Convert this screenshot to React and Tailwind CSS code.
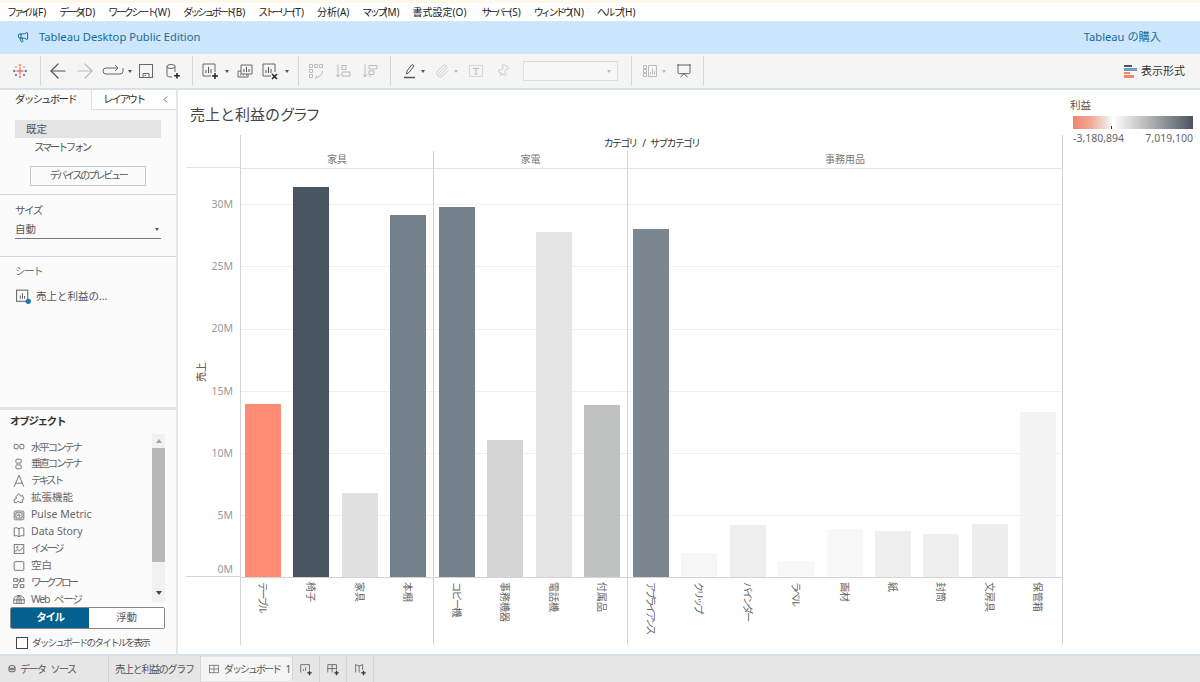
import {
  ArrowLeft,
  ArrowRight,
  ChevronLeft,
  Megaphone,
  Paperclip,
  Pin,
  Presentation,
} from 'lucide-react';

const jp = 'font-["Noto_Sans","Noto_Sans_CJK_JP",sans-serif]';

// the reference font has much narrower kana than Noto, so kana strings get negative tracking
const menus = [
  ['ファイル', '(F)', 'tracking-[-3px]'],
  ['データ', '(D)', 'tracking-[-2.400px]'],
  ['ワークシート', '(W)', 'tracking-[-2.250px]'],
  ['ダッシュボード', '(B)', 'tracking-[-2.900px]'],
  ['ストーリー', '(T)', 'tracking-[-3.200px]'],
  ['分析', '(A)', ''],
  ['マップ', '(M)', 'tracking-[-2.600px]'],
  ['書式設定', '(O)', ''],
  ['サーバー', '(S)', 'tracking-[-3px] ml-[2px]'],
  ['ウィンドウ', '(N)', 'tracking-[-2.700px]'],
  ['ヘルプ', '(H)', 'tracking-[-1.600px]'],
];

const panes = [
  {
    name: '家具',
    pad: 'pl-[4px]',
    size: 'w-[193px]',
    bars: [
      ['テーブル', 173, '#ff8c73', 'tracking-[-2.500px]'],
      ['椅子', 390, '#4a5460', ''],
      ['家具', 84, '#e1e1e1', ''],
      ['本棚', 362, '#75818a', ''],
    ],
  },
  {
    name: '家電',
    pad: 'pl-[5px]',
    size: 'w-[194px]',
    bars: [
      ['コピー機', 370, '#74808a', 'tracking-[-1.500px]'],
      ['事務機器', 137, '#d4d4d4', ''],
      ['電話機', 345, '#e4e4e4', ''],
      ['付属品', 172, '#c0c2c1', ''],
    ],
  },
  {
    name: '事務用品',
    pad: 'pl-[5px]',
    size: 'w-[434px]',
    bars: [
      ['アプライアンス', 348, '#7c868e', 'tracking-[-2.700px]'],
      ['クリップ', 24, '#f6f6f6', 'tracking-[-2.500px]'],
      ['バインダー', 52, '#eeeeee', 'tracking-[-2.500px]'],
      ['ラベル', 16, '#f8f8f8', 'tracking-[-2.500px]'],
      ['画材', 48, '#f8f8f8', ''],
      ['紙', 46, '#efefef', ''],
      ['封筒', 43, '#efefef', ''],
      ['文房具', 53, '#ededed', ''],
      ['保管箱', 165, '#f4f4f4', ''],
    ],
  },
];

const ticks = ['30M', '25M', '20M', '15M', '10M', '5M'];

const Svg = ({ children, className = 'w-4 h-4' }) => (
  <svg viewBox="0 0 16 16" fill="none" stroke="#666" strokeWidth="1" className={`${className} shrink-0`}>
    {children}
  </svg>
);

const Caret = ({ light, className = '' }) => (
  <span className={`shrink-0 w-0 h-0 mr-[1px] border-x-[2px] border-x-transparent border-t-[3px] ${light ? 'border-t-[#bbb]' : 'border-t-[#555]'} ${className}`} />
);

const Divider = ({ className = '' }) => <div className={`w-px h-[30px] bg-[#d6d6d6] shrink-0 ${className}`} />;

const ChartIcon = ({ children }) => (
  <svg viewBox="0 0 18 18" fill="none" stroke="#666" strokeWidth="1" className="w-[18px] h-[18px] shrink-0">
    <path d="M14 10V2H2v12h8" />
    <path d="M5 11V8M7.500 11V5M10 11V7" stroke="#555" />
    {children}
  </svg>
);

const objects = [
  ['水平コンテナ', 'tracking-[-2.200px]', <g key="a"><rect x="2.500" y="5" width="4.500" height="5" rx="1" /><rect x="9" y="5" width="4.500" height="5" rx="1" /></g>],
  ['垂直コンテナ', 'tracking-[-2.200px]', <g key="b"><rect x="4.500" y="2.500" width="6" height="4.500" rx="1" /><rect x="4.500" y="9" width="6" height="4.500" rx="1" /></g>],
  ['テキスト', 'tracking-[-2.800px]', <path key="c" d="M2.500 14.500 8 1.500l5.500 13M4.300 10.500h7.400" />],
  ['拡張機能', '', <path key="d" d="M2.500 13V9.500L5 8.500 4.500 6.500 7.500 3l2.500 3 2-1 1.500 4-2 1 .5 3H8L7 11.500 5 13.500z" />],
  ['Pulse Metric', '', <g key="e"><rect x="2.500" y="3.500" width="11" height="10" rx="1.500" /><rect x="4.500" y="5.500" width="7" height="6" /><path d="M6 8.500h1l1-1.500 .5 3 1-1.500" /></g>],
  ['Data Story', '', <path key="f" d="M8 4.500C6.500 3 4.500 3 2.500 3.500v9c2-.5 4-.5 5.500 1 1.500-1.500 3.500-1.500 5.500-1v-9C11.500 3 9.500 3 8 4.500zM8 4.500v9" />],
  ['イメージ', 'tracking-[-2.800px]', <g key="g"><rect x="2.500" y="3" width="11" height="10" /><path d="m3 11 3.500-2.500 2 1.500 4-3.500" /><circle cx="6" cy="6" r=".8" /></g>],
  ['空白', '', <rect key="h" x="2.500" y="3" width="11" height="10" rx="1" />],
  ['ワークフロー', 'tracking-[-3px]', <g key="i"><rect x="2" y="3" width="4" height="3" /><rect x="9.500" y="3" width="4" height="3" /><rect x="2" y="10" width="4" height="3" /><rect x="9.500" y="10" width="4" height="3" /><path d="M6 4.500h3.500M9.500 5.500 6 10.500" /></g>],
  ['Web ページ', 'tracking-[-1.200px] [word-spacing:3px]', <g key="j"><path d="M2 9a6 5 0 0 1 12 0v4H2z" /><path d="M2 9h12M8 4v9M5.500 13V9c0-2 1-4 2.500-5 1.500 1 2.500 3 2.500 5v4" /></g>],
];

const Sidebar = () => (
  <aside className="w-[178px] shrink-0 flex flex-col bg-[#fbfbfb] border-r-2 border-[#dfe6ec]">
    <div className="h-[20px] flex text-[10.500px] text-[#333] shrink-0">
      <div className="w-[91px] bg-[#fbfbfb] pl-[15px] pt-[2px] tracking-[-1.800px] whitespace-nowrap">ダッシュボード</div>
      <div className="flex-1 flex items-center justify-between bg-white border-l border-b border-[#ddd] pl-[11px] pr-[5px]">
        <span className="tracking-[-2.300px]">レイアウト</span>
        <ChevronLeft size={11} color="#555" />
      </div>
    </div>
    <div className="h-[85px] shrink-0 border-b border-[#d4d4d4] pt-[10px] text-[10.500px] text-[#555]">
      <div className="mx-[15px] h-[18px] leading-[18px] pl-[11px] bg-[#e4e4e4]">既定</div>
      <div className="pl-[34px] mt-[1px] leading-[17px] tracking-[-2.500px]">スマートフォン</div>
      <div className="mx-[30px] mt-[10px] h-[20px] leading-[17px] text-center text-[10px] border border-[#c8c8c8] bg-[#fbfbfb] tracking-[-2.300px]">デバイスのプレビュー</div>
    </div>
    <div className="h-[62px] shrink-0 border-b border-[#d4d4d4] px-[15px] pt-[7px] text-[10.500px] text-[#555]">
      <div className="leading-[16px] tracking-[-1.500px]">サイズ</div>
      <div className="mt-[1px] h-[20px] pt-[2px] flex items-center justify-between border-b border-[#777] pr-[1px]">
        <span>自動</span>
        <Caret />
      </div>
    </div>
    <div className="h-[153px] shrink-0 border-b-[3px] border-[#e4e4e4] px-[15px] pt-[6px] text-[10.500px] text-[#777]">
      <div className="leading-[16px] tracking-[-1.500px]">シート</div>
      <div className="mt-[9px] flex items-center gap-[4px] text-[#555]">
        <Svg className="w-[17px] h-[17px]">
          <rect x="1.500" y="2" width="10.500" height="10.500" />
          <path d="M5 10V7M7 10V5M9 10V7.500" />
          <circle cx="12.500" cy="12.500" r="2.500" fill="#1f77b4" stroke="none" />
        </Svg>
        <span>売上と利益の…</span>
      </div>
    </div>
    <div className="flex-1 flex flex-col pl-[10px] pr-[11px] pt-[3px] min-h-0">
      <div className="text-[10.500px] font-bold text-[#333] leading-[16px] tracking-[-1.300px]">オブジェクト</div>
      <div className="mt-[5px] h-[171px] flex items-start shrink-0">
        <div className="flex-1 flex flex-col pt-[5px] text-[10.500px] text-[#666]">
          {objects.map(([label, tracking, icon]) => (
            <div key={label} className="h-[16.900px] shrink-0 flex items-center gap-[5px] pl-[2px] whitespace-nowrap">
              <Svg className="w-[14px] h-[14px]">{icon}</Svg>
              <span className={tracking}>{label}</span>
            </div>
          ))}
        </div>
        <div className="w-[13px] h-[168px] bg-[#f1f1f1] flex flex-col items-center">
          <div className="h-[14px] flex items-center">
            <span className="w-0 h-0 border-x-[3px] border-x-transparent border-b-[4px] border-b-[#a6a6a6]" />
          </div>
          <div className="w-full h-[114px] bg-[#b8b8b8]" />
          <div className="flex-1 flex items-end pb-[7px]">
            <span className="w-0 h-0 border-x-[3px] border-x-transparent border-t-[4px] border-t-[#444]" />
          </div>
        </div>
      </div>
      <div className="mt-[2px] h-[22px] flex border border-[#888] rounded-[2px] text-[10.500px] overflow-hidden w-[155px] shrink-0">
        <div className="w-[78px] bg-[#04618d] text-white font-bold flex items-center justify-center tracking-[-1.300px]">タイル</div>
        <div className="flex-1 bg-white text-[#555] flex items-center justify-center">浮動</div>
      </div>
      <div className="mt-[7px] ml-[6px] flex items-center gap-[4px] text-[9.500px] text-[#555] whitespace-nowrap">
        <span className="w-[12px] h-[12px] border border-[#444] bg-white shrink-0" />
        <span className="tracking-[-1.700px]">ダッシュボードのタイトルを表示</span>
      </div>
    </div>
  </aside>
);

const Chart = () => (
  <div className="w-[885px] shrink-0 flex flex-col pl-[8px] bg-white">
    <div className="h-[45px] pl-[4px] flex items-start shrink-0">
      <h1 className="text-[15px] leading-[22px] mt-[13px] font-normal text-[#444] whitespace-nowrap">
        売上と利益の<span className="tracking-[-2.300px]">グラフ</span>
      </h1>
    </div>
    <div className="flex shrink-0">
      <div className="w-[54px] shrink-0 flex flex-col">
        <div className="h-[33px] border-b border-[#e4e4e4]" />
        <div className="h-[409px] relative border-b border-[#d4d4d4]">
          <span className="absolute left-[8px] top-[194px] text-[10px] text-[#444] [writing-mode:vertical-rl] [text-orientation:sideways] rotate-180">売上</span>
          <div className="h-full pt-[29px] pr-[7px] flex flex-col items-end text-[10.500px] text-[#999]">
            {ticks.map((t) => (
              <div key={t} className="h-[62.300px] leading-[14px]">{t}</div>
            ))}
            <div className="leading-[14px] -mt-[8px]">0M</div>
          </div>
        </div>
      </div>
      <div className="w-[823px] border-l border-r border-[#d4d4d4]">
        <div className="h-[16px] text-[10px] leading-[16px] text-[#333] text-center tracking-[-1.800px] [word-spacing:5px]">カテゴリ / サブカテゴリ</div>
        <div className="flex">
          {panes.map((pane, i) => (
            <div key={pane.name} className={`${pane.size} shrink-0 ${i < 2 ? 'border-r border-[#d4d4d4]' : ''} flex flex-col`}>
              <div className="h-[17px] text-[10px] leading-[16px] text-[#777] text-center border-b border-[#e4e4e4] box-content">{pane.name}</div>
              <div className={`h-[409px] relative border-b border-[#d4d4d4] flex items-end gap-[12.400px] ${pane.pad}`}>
                <div className="absolute inset-x-0 top-[35px] h-[312px] flex flex-col">
                  {ticks.map((t) => (
                    <div key={t} className="h-[62.300px] border-t border-[#f0f0f0] shrink-0" />
                  ))}
                </div>
                {pane.bars.map(([label, h, color]) => (
                  <div key={label} className="relative w-[36px] shrink-0" style={{ height: h, backgroundColor: color }} />
                ))}
              </div>
              <div className={`h-[67px] flex gap-[12.400px] pt-[4px] ${pane.pad}`}>
                {pane.bars.map(([label, , , tracking]) => (
                  <div key={label} className="w-[36px] shrink-0 flex justify-center">
                    <span className={`text-[10px] leading-[14px] text-[#666] [writing-mode:vertical-rl] [text-orientation:sideways] whitespace-nowrap h-fit ${tracking}`}>{label}</span>
                  </div>
                ))}
              </div>
            </div>
          ))}
        </div>
      </div>
    </div>
  </div>
);

const Legend = () => (
  <div className="flex-1 pl-[10px] pt-[7px] bg-white min-w-0">
    <div className="text-[10.500px] leading-[16px] text-[#555] -ml-[3px]">利益</div>
    <div className="relative mt-[3px] w-[120px] h-[13px] bg-[linear-gradient(90deg,#f5836d_0%,#f0aa98_15%,#efe3da_28%,#ffffff_33%,#c9c9c9_55%,#8a8f94_78%,#4a5460_100%)]">
      <span className="absolute left-[38px] bottom-0 w-px h-[3px] bg-[#333]" />
    </div>
    <div className="w-[120px] mt-[2px] flex justify-between text-[10.500px] leading-[14px] text-[#666]">
      <span>-3,180,894</span>
      <span>7,019,100</span>
    </div>
  </div>
);

export default function App() {
  return (
    <div className={`w-[1200px] h-[682px] overflow-hidden flex flex-col bg-white ${jp}`}>
      <div className="h-[3px] shrink-0 bg-[#fdf9e8]" />
      <nav className="h-[18px] shrink-0 flex items-center pl-[7px] gap-[13px] text-[10px] text-[#222] whitespace-nowrap">
        {menus.map(([m, key, tracking]) => (
          <span key={m} className={tracking}>{m}<span className="tracking-normal">{key}</span></span>
        ))}
      </nav>
      <div className="h-[33px] shrink-0 bg-[#cce6fd] flex items-center justify-between pl-[17px] pr-[39px] text-[11.200px] text-[#186b93]">
        <div className="flex items-center gap-[10px]">
          <Megaphone size={12} color="#186b93" />
          <span>Tableau Desktop Public Edition</span>
        </div>
        <span>Tableau の購入</span>
      </div>
      <div className="h-[36px] shrink-0 bg-[#f5f5f5] border-b-2 border-[#d5e0e8] flex items-center pl-[12px] pr-[15px]">
        <Svg>
          <path d="M8 4.500v7M4.500 8h7" stroke="#e8765c" strokeWidth="1.300" />
          <path d="M8 1v2.500M6.800 2.200h2.400M8 12.500V15M6.800 13.800h2.400" stroke="#e8765c" />
          <path d="M1 8h2.500M2.200 6.800v2.400M12.500 8H15M13.800 6.800v2.400" stroke="#3f6f96" />
          <path d="M3 4h2M4 3v2M11 4h2M12 3v2" stroke="#e8a090" />
          <path d="M3 12h2M4 11v2M11 12h2M12 11v2" stroke="#3f6f96" />
        </Svg>
        <Divider className="ml-[12px]" />
        <ArrowLeft size={24} color="#555" strokeWidth={1.200} className="ml-[5px] shrink-0" />
        <ArrowRight size={24} color="#bbb" strokeWidth={1.200} className="ml-[3px] shrink-0" />
        <svg viewBox="0 0 23 16" fill="none" stroke="#666" className="ml-[5px] w-[23px] h-[16px] shrink-0">
          <path d="M15 5H4a3 3 0 0 0 0 6h14a3 3 0 0 0 3-3V5" />
          <path d="m13 2 3 3-3 3" />
        </svg>
        <Caret className="ml-[3px]" />
        <Svg className="ml-[5px] w-4 h-4">
          <rect x="1.500" y="1.500" width="13" height="13" />
          <path d="M5 14.500v-4h6v4M6.500 12.500h1.500" />
        </Svg>
        <Svg className="ml-[11px] w-4 h-4">
          <ellipse cx="6" cy="3.500" rx="4" ry="2" />
          <path d="M2 3.500v9c0 1 1.500 1.500 5 1.500M10 3.500V9" />
          <path d="M12 10v5.500M9.200 12.700h5.600" stroke="#222" strokeWidth="1.500" />
        </Svg>
        <Divider className="ml-[11px]" />
        <div className="ml-[8px] shrink-0"><ChartIcon><path d="M14 11v6M11 14h6" stroke="#222" strokeWidth="1.500" /></ChartIcon></div>
        <Caret className="ml-[6px]" />
        <svg viewBox="0 0 18 18" fill="none" stroke="#666" className="ml-[6px] w-[18px] h-[18px] shrink-0">
          <path d="M5 3h11v9H5zM5 9H2v6h10v-3" />
          <path d="M8 10V7M10.500 10V5M13 10V7M4 13h1M7 13h1M10 13h1" stroke="#555" />
        </svg>
        <div className="ml-[7px] shrink-0"><ChartIcon><path d="m11 12 5 5M16 12l-5 5" stroke="#222" strokeWidth="1.500" /></ChartIcon></div>
        <Caret className="ml-[6px]" />
        <Divider className="ml-[8px]" />
        <svg viewBox="0 0 17 17" fill="none" stroke="#bbb" className="ml-[9px] w-[17px] h-[17px] shrink-0">
          <path d="M1.500 1.500h3v3h-3zM6.500 1.500h3v3h-3zM11.500 1.500h3v3h-3zM1.500 6.500h3v3h-3zM1.500 11.500h3v3h-3zM14.500 8c0 3-2 5.500-6 6.500M8 12.500l1 2-2 1" />
        </svg>
        <svg viewBox="0 0 17 17" fill="none" stroke="#bbb" className="ml-[10px] w-[17px] h-[17px] shrink-0">
          <path d="M3 1.500v12M1 11.500l2 2.500 2-2.500M7 2.500h4v4H7zM7 9h8v4H7z" />
        </svg>
        <svg viewBox="0 0 17 17" fill="none" stroke="#bbb" className="ml-[10px] w-[17px] h-[17px] shrink-0">
          <path d="M3 1.500v12M1 11.500l2 2.500 2-2.500M7 2.500h8v3.500H7zM7 8h5v3.500H7zM7 13h2" />
        </svg>
        <Divider className="ml-[11px]" />
        <svg viewBox="0 0 14 16" fill="none" stroke="#555" className="ml-[12px] w-[14px] h-[16px] shrink-0">
          <path d="m3.500 11 .5-3 5-6.500 2 1.500-5 6.500z" />
          <path d="M1 14.500h11" strokeWidth="1.500" />
        </svg>
        <Caret className="ml-[4px]" />
        <Paperclip size={14} color="#bbb" strokeWidth={1.250} className="ml-[9px] shrink-0" />
        <Caret light className="ml-[5px]" />
        <Svg className="ml-[9px] w-4 h-4">
          <rect x="1.500" y="2.500" width="13" height="11" strokeDasharray="1 1" stroke="#bbb" />
          <path d="M5 5.500h6M8 5.500v5.500M6.500 11h3" stroke="#bbb" />
        </Svg>
        <Pin size={14} color="#bbb" strokeWidth={1.250} className="ml-[12px] shrink-0 rotate-[30deg]" />
        <div className="ml-[13px] w-[95px] h-[20px] border border-[#ddd] bg-[#f7f7f7] flex items-center justify-end pr-[5px] shrink-0">
          <Caret light />
        </div>
        <Divider className="ml-[13px]" />
        <Svg className="ml-[10px] w-4 h-4">
          <path d="M1.500 2.500h3v3h-3zM1.500 6.500h3v3h-3zM1.500 10.500h3v3h-3zM6.500 2.500h8v11h-8z" stroke="#bbb" />
          <path d="M8.500 11.500V9M10.500 11.500V5.500M12.500 11.500V8" stroke="#bbb" />
        </Svg>
        <Caret light className="ml-[4px]" />
        <Presentation size={16} color="#444" strokeWidth={1.250} className="ml-[9px] shrink-0" />
        <Divider className="ml-[11px]" />
        <div className="ml-auto flex items-center gap-[4px] text-[11px] text-[#333]">
          <div className="w-[13px] flex flex-col gap-[1px]">
            <span className="w-[8px] h-[2px] bg-[#4a5460]" />
            <span className="w-[13px] h-[3px] bg-[#6f9fc4]" />
            <span className="w-[6px] h-[2px] bg-[#f08a5c]" />
            <span className="w-[10px] h-[3px] bg-[#f5836d]" />
          </div>
          <span>表示形式</span>
        </div>
      </div>
      <div className="flex-1 flex min-h-0 border-b-2 border-[#d5e0e8]">
        <Sidebar />
        <Chart />
        <Legend />
      </div>
      <div className="h-[26px] shrink-0 bg-[#e6e6e6] flex items-stretch text-[10px] text-[#555]">
        <div className="w-[109px] border-r border-[#d4d4d4] flex items-center gap-[4px] pl-[8px] whitespace-nowrap">
          <Svg className="w-[8px] h-[10px]"><ellipse cx="8" cy="4" rx="6" ry="3" strokeWidth="2" /><path d="M2 4v8c0 2 12 2 12 0V4M2 8c0 2 12 2 12 0" strokeWidth="2" /></Svg>
          <span className="tracking-[-1.500px] [word-spacing:4px]">データ ソース</span>
        </div>
        <div className="w-[92px] border-r border-[#d4d4d4] flex items-center justify-center whitespace-nowrap tracking-[-1.300px]">売上と利益のグラフ</div>
        <div className="w-[92px] my-[1px] bg-[#f5f5f5] border-r border-[#d4d4d4] flex items-center gap-[4px] pl-[7px] whitespace-nowrap">
          <Svg className="w-[12px] h-[12px]"><rect x="2" y="3" width="12" height="10" /><path d="M2 8h12M8 3v10" /></Svg>
          <span className="tracking-[-2px] [word-spacing:5px]">ダッシュボード 1</span>
        </div>
        {[0, 1, 2].map((i) => (
          <div key={i} className="w-[27px] border-r border-[#d4d4d4] flex items-center justify-center">
            <Svg className="w-[14px] h-[14px]">
              {i === 0 && <path d="M2 12V3h10v6M5 10V8M7.500 10V6" />}
              {i === 1 && <path d="M2 12V3h10v6M2 7.500h10M7 3v9" />}
              {i === 2 && <path d="M3 12V3l4 1.500L11 3v6M7 4.500V12" />}
              <path d="M12 10v5M9.500 12.500h5" stroke="#333" strokeWidth="1.500" />
            </Svg>
          </div>
        ))}
      </div>
    </div>
  );
}
